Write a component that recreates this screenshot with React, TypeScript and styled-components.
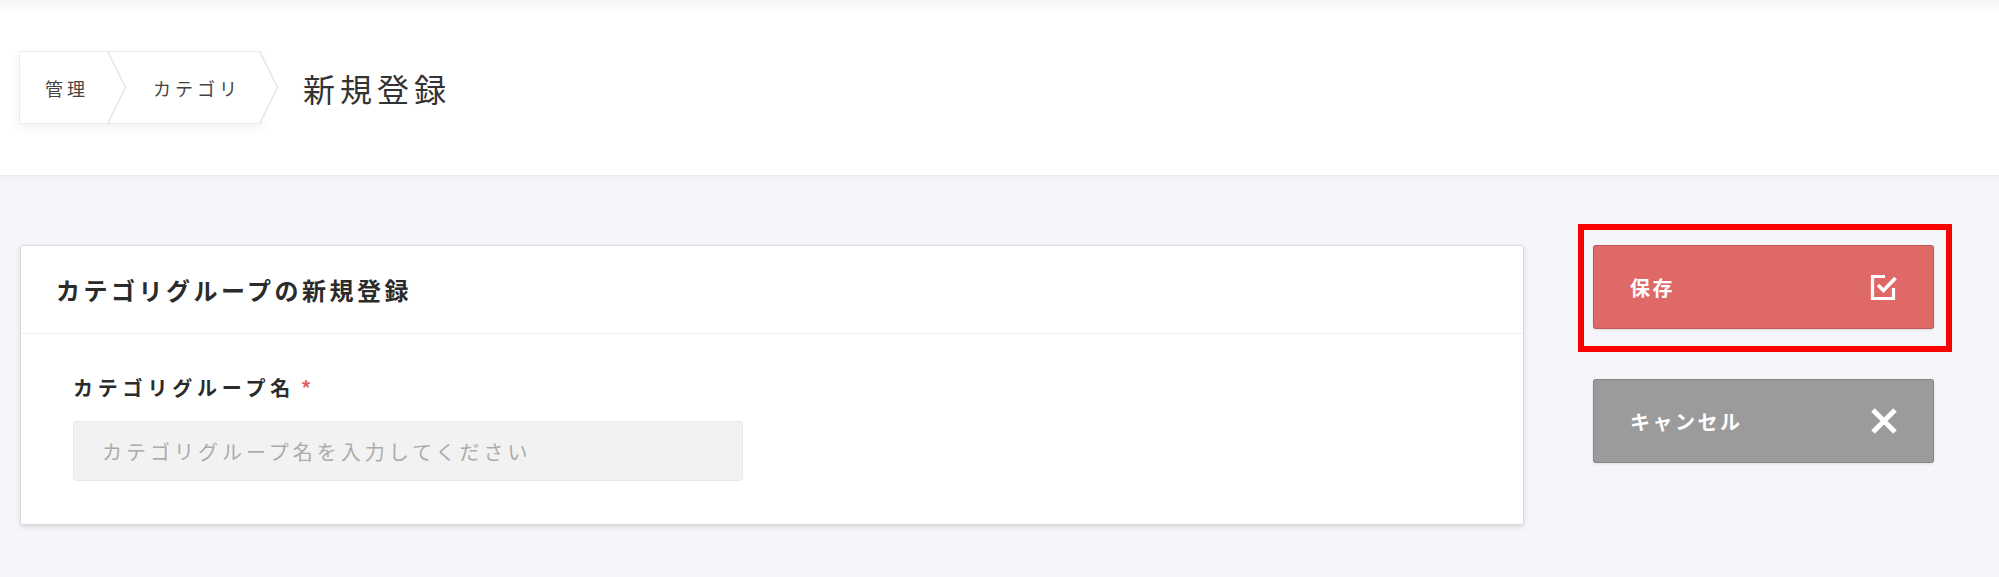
import React from "react";
import styled, { createGlobalStyle } from "styled-components";

const GlobalStyle = createGlobalStyle`
  html, body {
    margin: 0;
    padding: 0;
    background: #f5f6fa;
    font-family: "Noto Sans CJK JP", "Noto Sans", sans-serif;
    color: #333;
  }
  * { box-sizing: border-box; }
`;

const Page = styled.div`
  width: 1999px;
  min-height: 577px;
  background: #f5f6fa;
`;

const Header = styled.header`
  height: 176px;
  display: flex;
  align-items: center;
  padding-left: 19px;
  background: linear-gradient(#f6f6f6 0px, #ffffff 14px);
  border-bottom: 1px solid #ebecf0;
  box-shadow: 0 2px 6px rgba(0, 0, 0, 0.035);
`;

const Crumbs = styled.nav`
  display: flex;
  height: 73px;
  background: #fff;
  border: 1px solid #ececec;
  box-shadow: 0 4px 10px rgba(0, 0, 0, 0.05);
`;

const Crumb = styled.div<{ $first?: boolean }>`
  position: relative;
  display: flex;
  align-items: center;
  padding: ${(p) => (p.$first ? "0 19px 0 25px" : "0 19px 0 45px")};
  font-size: 18px;
  letter-spacing: 4px;
  color: #444;
  white-space: nowrap;
`;

const ChevronSvg = styled.svg`
  position: absolute;
  top: -1px;
  right: -19px;
  width: 20px;
  height: 73px;
  z-index: 1;
`;

const Chevron = () => (
  <ChevronSvg viewBox="0 0 20 73">
    <polyline points="0.5,0 18.5,36.5 0.5,73" fill="#fff" stroke="#e6e6e6" strokeWidth="1.5" />
  </ChevronSvg>
);

const PageTitle = styled.h1`
  margin: 0 0 0 42px;
  font-size: 32px;
  font-weight: 400;
  letter-spacing: 5px;
  color: #333;
`;

const Main = styled.main`
  display: flex;
  align-items: flex-start;
  gap: 69px;
  padding: 69px 65px 40px 20px;
`;

const Card = styled.section`
  flex: 1;
  background: #fff;
  border: 1px solid #dadada;
  border-radius: 3px;
  box-shadow: 0 2px 5px rgba(0, 0, 0, 0.12);
`;

const CardHeader = styled.div`
  height: 88px;
  display: flex;
  align-items: center;
  padding-left: 35px;
  border-bottom: 1px solid #efefef;
`;

const CardTitle = styled.h2`
  margin: 0;
  font-size: 24px;
  font-weight: 700;
  letter-spacing: 3.5px;
  color: #2b2b2b;
`;

const CardBody = styled.div`
  padding: 42px 52px 43px;
  display: flex;
  flex-direction: column;
  gap: 21px;
`;

const Label = styled.label`
  display: flex;
  align-items: center;
  font-size: 20px;
  line-height: 24px;
  font-weight: 700;
  letter-spacing: 4.8px;
  color: #2b2b2b;
`;

const Required = styled.span`
  color: #e0615e;
  margin-left: 6px;
  font-weight: 700;
`;

const Input = styled.input`
  width: 670px;
  height: 60px;
  padding: 0 0 0 28px;
  background: #f2f2f2;
  border: 1px solid #e9e9e9;
  border-radius: 3px;
  font-family: inherit;
  font-size: 20px;
  letter-spacing: 4px;
  color: #333;
  outline: none;
  &::placeholder {
    color: #ababab;
  }
`;

const Actions = styled.div`
  width: 341px;
  display: flex;
  flex-direction: column;
  gap: 50px;
`;

const Highlight = styled.div`
  position: relative;
  &::after {
    content: "";
    position: absolute;
    top: -21px;
    left: -15px;
    right: -18px;
    bottom: -23px;
    border: 6px solid #ff0000;
    pointer-events: none;
  }
`;

const ActionButton = styled.button<{ $tone: "save" | "cancel" }>`
  width: 100%;
  height: 84px;
  display: flex;
  align-items: center;
  justify-content: space-between;
  padding: 0 35px 0 36px;
  background: ${(p) => (p.$tone === "save" ? "#df6967" : "#9b9b9b")};
  border: 1px solid rgba(0, 0, 0, 0.14);
  border-radius: 3px;
  box-shadow: 0 1px 3px rgba(0, 0, 0, 0.1);
  color: #fff;
  font-family: inherit;
  font-size: 20px;
  font-weight: 700;
  letter-spacing: 2.5px;
  cursor: pointer;
`;

const Icon = styled.svg`
  width: 28px;
  height: 28px;
  flex: none;
`;

const CheckSquareIcon = () => (
  <Icon viewBox="0 0 28 28">
    <path d="M15 3.5 H2.5 V25.5 H23.5 V15" fill="none" stroke="#fff" strokeWidth="3.2" />
    <path d="M8 12 L13.5 17.5 L25.5 5" fill="none" stroke="#fff" strokeWidth="3.6" />
  </Icon>
);

const CloseIcon = () => (
  <Icon viewBox="0 0 28 28">
    <path d="M3 3 L25 25 M25 3 L3 25" stroke="#fff" strokeWidth="5" />
  </Icon>
);

export default function App() {
  return (
    <Page>
      <GlobalStyle />
      <Header>
        <Crumbs>
          <Crumb $first>
            管理
            <Chevron />
          </Crumb>
          <Crumb>
            カテゴリ
            <Chevron />
          </Crumb>
        </Crumbs>
        <PageTitle>新規登録</PageTitle>
      </Header>
      <Main>
        <Card>
          <CardHeader>
            <CardTitle>カテゴリグループの新規登録</CardTitle>
          </CardHeader>
          <CardBody>
            <Label>
              カテゴリグループ名<Required>*</Required>
            </Label>
            <Input placeholder="カテゴリグループ名を入力してください" />
          </CardBody>
        </Card>
        <Actions>
          <Highlight>
            <ActionButton $tone="save">
              保存
              <CheckSquareIcon />
            </ActionButton>
          </Highlight>
          <ActionButton $tone="cancel">
            キャンセル
            <CloseIcon />
          </ActionButton>
        </Actions>
      </Main>
    </Page>
  );
}
